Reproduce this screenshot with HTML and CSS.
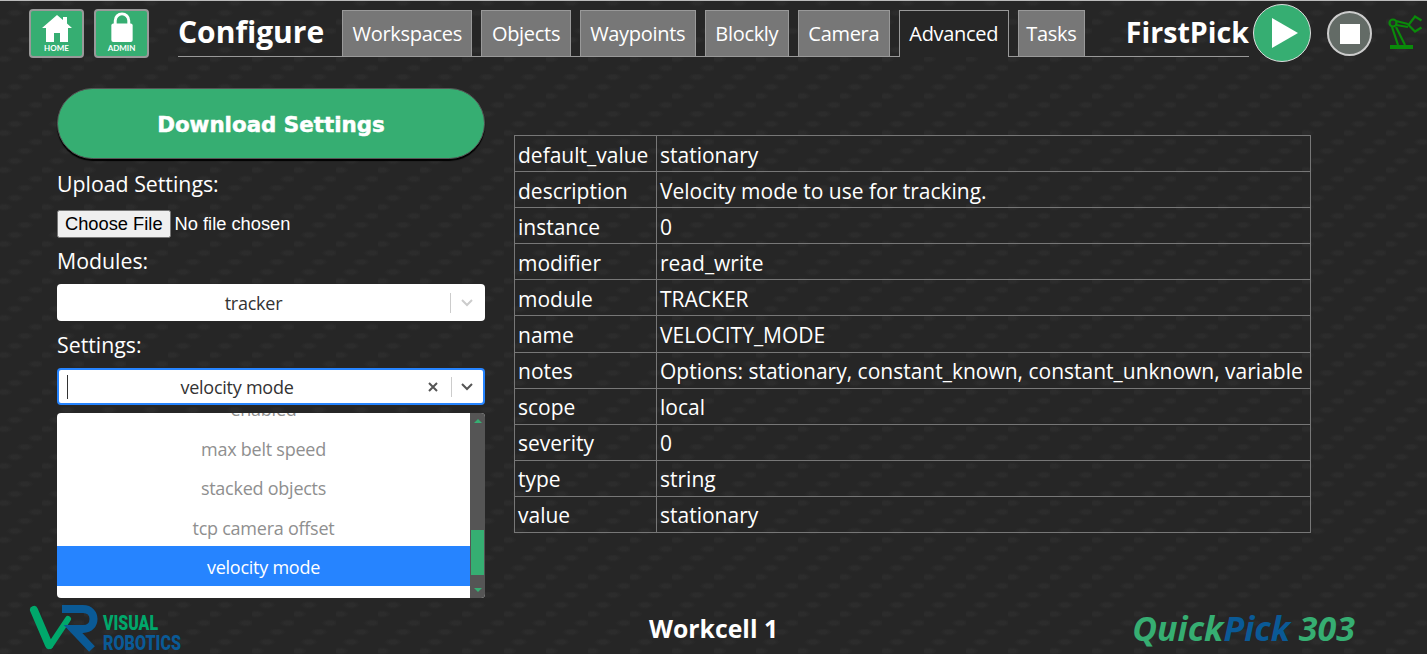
FILE: index.html
```html
<!DOCTYPE html>
<html lang="en">
<head>
  <meta charset="UTF-8">
  <meta name="viewport" content="width=device-width, initial-scale=1.0">
  <title>Configure - Advanced</title>
  <link rel="stylesheet" href="styles.css">
</head>
<body>
  <header class="topbar">
    <a class="nav-icon">
      <svg width="30" height="27" viewBox="0 0 30 27"><path fill="#fff" d="M15 0 L21 5 V2 H25 V8.5 L30 13 H26 V27 H18 V18 H12 V27 H4 V13 H0 Z"/></svg>
      <span>HOME</span>
    </a>
    <a class="nav-icon">
      <svg width="24" height="32" viewBox="0 0 24 32"><path fill="none" stroke="#fff" stroke-width="3" d="M5 14 V10 A7 7 0 0 1 19 10 V14"/><rect x="1" y="13" width="22" height="19" rx="2" fill="#fff"/></svg>
      <span>ADMIN</span>
    </a>
    <div class="titlebar">
      <h1>Configure</h1>
      <nav class="tabs">
        <a class="tab">Workspaces</a>
        <a class="tab">Objects</a>
        <a class="tab">Waypoints</a>
        <a class="tab">Blockly</a>
        <a class="tab">Camera</a>
        <a class="tab active">Advanced</a>
        <a class="tab">Tasks</a>
      </nav>
      <div class="app-name">FirstPick</div>
    </div>
    <button class="play">
      <svg width="28" height="30" viewBox="0 0 28 30"><path fill="#fff" d="M1 0 L27 15 L1 30 Z"/></svg>
    </button>
    <button class="stop"><span></span></button>
    <svg class="robot" width="36" height="36" viewBox="0 0 36 36">
      <g fill="none" stroke="#0a8a0a" stroke-width="2.2">
        <circle cx="6" cy="8" r="3.5"/>
        <path d="M5 12 L11 30 M9 12 L18 30"/>
        <path d="M9 6 L21 9 M9 10 L21 12"/>
        <path d="M34.5 5.5 L28 1.5 L21.5 10 L28 16.5 L34.5 12.5"/>
      </g>
      <rect x="3" y="30" width="23" height="4" fill="#0a8a0a"/>
    </svg>
  </header>

  <main class="content">
    <section class="left-col">
      <button class="download">Download Settings</button>
      <label class="field-label upload-label">Upload Settings:</label>
      <input class="file-input" type="file">
      <label class="field-label">Modules:</label>
      <div class="select">
        <span class="select-value">tracker</span>
        <span class="select-sep"></span>
        <svg class="chevron" width="14" height="8" viewBox="0 0 14 8"><path fill="none" stroke="#ccc" stroke-width="2" d="M2 1 L7 6 L12 1"/></svg>
      </div>
      <label class="field-label settings-label">Settings:</label>
      <div class="select-wrap">
        <div class="select focused">
          <span class="caret"></span>
          <span class="select-value">velocity mode</span>
          <svg class="clear" width="10" height="10" viewBox="0 0 10 10"><path stroke="#555" stroke-width="2" d="M1 1 L9 9 M9 1 L1 9"/></svg>
          <span class="select-sep"></span>
          <svg class="chevron" width="14" height="8" viewBox="0 0 14 8"><path fill="none" stroke="#555" stroke-width="2" d="M2 1 L7 6 L12 1"/></svg>
        </div>
        <div class="menu">
          <div class="menu-list">
            <div class="menu-item cut">enabled</div>
            <div class="menu-item">max belt speed</div>
            <div class="menu-item">stacked objects</div>
            <div class="menu-item">tcp camera offset</div>
            <div class="menu-item selected">velocity mode</div>
          </div>
          <div class="scrollbar">
            <span class="arrow-up"></span>
            <span class="thumb"></span>
            <span class="arrow-down"></span>
          </div>
        </div>
      </div>
    </section>

    <table class="details">
      <tr><td>default_value</td><td>stationary</td></tr>
      <tr><td>description</td><td>Velocity mode to use for tracking.</td></tr>
      <tr><td>instance</td><td>0</td></tr>
      <tr><td>modifier</td><td>read_write</td></tr>
      <tr><td>module</td><td>TRACKER</td></tr>
      <tr><td>name</td><td>VELOCITY_MODE</td></tr>
      <tr><td>notes</td><td>Options: stationary, constant_known, constant_unknown, variable</td></tr>
      <tr><td>scope</td><td>local</td></tr>
      <tr><td>severity</td><td>0</td></tr>
      <tr><td>type</td><td>string</td></tr>
      <tr><td>value</td><td>stationary</td></tr>
    </table>
  </main>

  <footer class="bottombar">
    <svg class="logo" width="190" height="50" viewBox="0 0 190 50">
      <path fill="none" stroke="#00a86b" stroke-width="8" stroke-linecap="round" d="M5 6 L20 41"/>
      <path fill="none" stroke="#00a86b" stroke-width="6" stroke-linecap="round" d="M21 42 L39 15"/>
      <path fill="none" stroke="#0a5a96" stroke-width="8" d="M33 5 H54 C68 5 68 25 54 25 H44 L63 45"/>
      <text x="74" y="26" fill="#00a86b" class="logo-text" textLength="55" lengthAdjust="spacingAndGlyphs">VISUAL</text>
      <text x="74" y="46" fill="#0a5a96" class="logo-text" textLength="78" lengthAdjust="spacingAndGlyphs">ROBOTICS</text>
    </svg>
    <div class="workcell">Workcell 1</div>
    <div class="product"><span class="green">Quick</span><span class="blue">Pick</span><span class="green"> 303</span></div>
  </footer>
</body>
</html>
```

FILE: styles.css
```css
/* ======= Global ======= */
html, body {
  height: 100%;
}

body {
  margin: 0;
  height: 654px;
  overflow: hidden;
  display: flex;
  flex-direction: column;
  box-sizing: border-box;
  border-top: 1px solid #bbb;
  font-family: "Open Sans", "Noto Sans", sans-serif;
  color: #fff;
  background-color: #262626;
  /* carbon weave: four soft blotches staggered on a 42x37 tile */
  background-image:
    radial-gradient(ellipse 9px 4px at 25px 3px, #2c2c2c 40%, transparent 100%),
    radial-gradient(ellipse 9px 4px at 15px 13px, #2c2c2c 40%, transparent 100%),
    radial-gradient(ellipse 9px 4px at 4px 22px, #2c2c2c 40%, transparent 100%),
    radial-gradient(ellipse 9px 4px at 36px 31px, #2c2c2c 40%, transparent 100%);
  background-size: 42px 37px;
}

/* ======= Header ======= */
.topbar {
  display: flex;
  align-items: flex-start;
  height: 66px;
  padding-left: 29px;
  flex-shrink: 0;
}

.nav-icon {
  width: 55px;
  height: 49px;
  margin-top: 8px;
  margin-right: 10px;
  box-sizing: border-box;
  border: 2px solid #999;
  border-radius: 4px;
  background: #36ae72;
  display: flex;
  flex-direction: column;
  align-items: center;
  justify-content: flex-end;
  padding-bottom: 3px;
  gap: 2px;
}

.nav-icon span {
  font-size: 8px;
  font-weight: 700;
  line-height: 9px;
  font-family: "Lato", sans-serif;
}

.titlebar {
  width: 1071px;
  height: 47px;
  margin-top: 8px;
  margin-left: 19px;
  display: flex;
  align-items: flex-end;
  border-bottom: 1px solid #999;
}

.titlebar h1 {
  margin: 0 18px 0 0;
  font-size: 30px;
  font-weight: 700;
  line-height: 47px;
  height: 47px;
  position: relative;
  top: -1px;
  width: 146px;
  white-space: nowrap;
}

.tabs {
  display: flex;
  gap: 9px;
}

.tab {
  height: 46px;
  box-sizing: border-box;
  padding: 0 9.5px;
  font-size: 20px;
  line-height: 46px;
  letter-spacing: -0.3px;
  background: #777;
  border: 1px solid #999;
  border-bottom: none;
  white-space: nowrap;
}

.tab:last-child {
  padding: 0 7.5px;
}

.tab.active {
  background: #262626;
  margin-bottom: -1px;
  height: 47px;
}

.app-name {
  margin-left: auto;
  font-size: 28.6px;
  font-weight: 700;
  line-height: 47px;
  height: 47px;
  position: relative;
  top: -1px;
  white-space: nowrap;
}

.play {
  width: 58px;
  height: 58px;
  margin-top: 3px;
  margin-left: 4px;
  padding: 0 0 0 6px;
  border: 1px solid #ddd;
  border-radius: 50%;
  background: #36ae72;
  display: flex;
  align-items: center;
  justify-content: center;
}

.stop {
  width: 45px;
  height: 45px;
  margin-top: 10px;
  margin-left: 16px;
  padding: 0;
  border: 2px solid #ccc;
  border-radius: 50%;
  background: #636b66;
  display: flex;
  align-items: center;
  justify-content: center;
}

.stop span {
  width: 20px;
  height: 20px;
  background: #fff;
}

.robot {
  margin-top: 14px;
  margin-left: 15px;
}

/* ======= Main content ======= */
.content {
  flex: 1;
  display: flex;
  align-items: flex-start;
  padding: 21px 0 0 57px;
  min-height: 0;
}

.left-col {
  width: 428px;
  display: flex;
  flex-direction: column;
}

.download {
  height: 71px;
  padding-top: 2px;
  border: 1px solid #555;
  border-radius: 36px;
  background: #36ae72;
  box-shadow: 0 2px 1px #000;
  color: #fff;
  font-family: "DejaVu Sans", sans-serif;
  font-size: 21.4px;
  font-weight: 700;
  -webkit-text-stroke: 0.5px #fff;
  cursor: pointer;
}

.field-label {
  font-size: 21.3px;
  line-height: 28px;
}

.upload-label {
  margin-top: 11px;
}

.file-input {
  margin-top: 12px;
  height: 28px;
  font-family: "Liberation Sans", sans-serif;
  font-size: 18.3px;
  color: #fff;
}

.file-input + .field-label {
  margin-top: 9px;
}

.settings-label {
  margin-top: 10px;
}

/* Select boxes */
.select {
  margin-top: 9px;
  height: 37px;
  box-sizing: border-box;
  border-radius: 4px;
  background: #fff;
  color: #333;
  display: flex;
  align-items: center;
}

.select-wrap {
  position: relative;
}

.select.focused {
  border: 2px solid #2684ff;
}

.select-value {
  flex: 1;
  text-align: center;
  font-size: 18px;
  letter-spacing: -0.25px;
}

.select-sep {
  width: 1px;
  height: 20px;
  background: #ccc;
  margin-right: 9px;
}

.chevron {
  margin-right: 11px;
}

.focused .select-value {
  padding-right: 22px;
}

.focused .select-sep {
  margin-right: 8px;
}

.focused .chevron {
  margin-right: 9px;
}

.clear {
  margin-right: 13px;
}

.caret {
  width: 1px;
  height: 24px;
  background: #333;
  margin-left: 8px;
}

/* Dropdown list lies over the page */
.menu {
  position: absolute;
  top: 54px;
  left: 0;
  width: 428px;
  height: 185px;
  background: #fff;
  border-radius: 4px;
  overflow: hidden;
  display: flex;
  z-index: 2;
}

.menu-list {
  flex: 1;
  color: #8f8f8f;
  font-size: 18px;
  letter-spacing: -0.25px;
  text-align: center;
}

.menu-item {
  height: 39.5px;
  line-height: 42px;
}

.menu-item.cut {
  margin-top: -25px;
}

.menu-item.selected {
  background: #2684ff;
  color: #fff;
}

.scrollbar {
  width: 15px;
  background: #555;
  position: relative;
}

.thumb {
  position: absolute;
  left: 1px;
  right: 1px;
  top: 117px;
  height: 45px;
  background: #36ae72;
}

.arrow-up, .arrow-down {
  position: absolute;
  left: 4px;
  border-left: 4px solid transparent;
  border-right: 4px solid transparent;
}

.arrow-up {
  top: 6px;
  border-bottom: 4px solid #36ae72;
}

.arrow-down {
  bottom: 6px;
  border-top: 4px solid #36ae72;
}

/* Details table */
.details {
  margin-top: 47px;
  margin-left: 29px;
  width: 797px;
  border-collapse: collapse;
  font-size: 21px;
}

.details td {
  height: 36.1px;
  padding: 2px 3px 0;
  border: 1px solid #777;
  white-space: nowrap;
  box-sizing: border-box;
}

.details td:first-child {
  width: 142px;
}

/* ======= Footer ======= */
.bottombar {
  height: 53px;
  flex-shrink: 0;
  display: flex;
  align-items: center;
  padding-left: 29px;
}

.logo {
  margin-top: 3px;
}

.logo-text {
  font-family: "Roboto", sans-serif;
  font-size: 21px;
  font-weight: 900;
}

.workcell {
  margin-left: 430px;
  font-size: 24.8px;
  font-weight: 700;
  white-space: nowrap;
}

.product {
  margin-left: auto;
  margin-right: 72px;
  font-size: 34px;
  font-weight: 700;
  font-style: italic;
  white-space: pre;
}

.green {
  color: #36ae72;
}

.blue {
  color: #0a5a96;
}
```
